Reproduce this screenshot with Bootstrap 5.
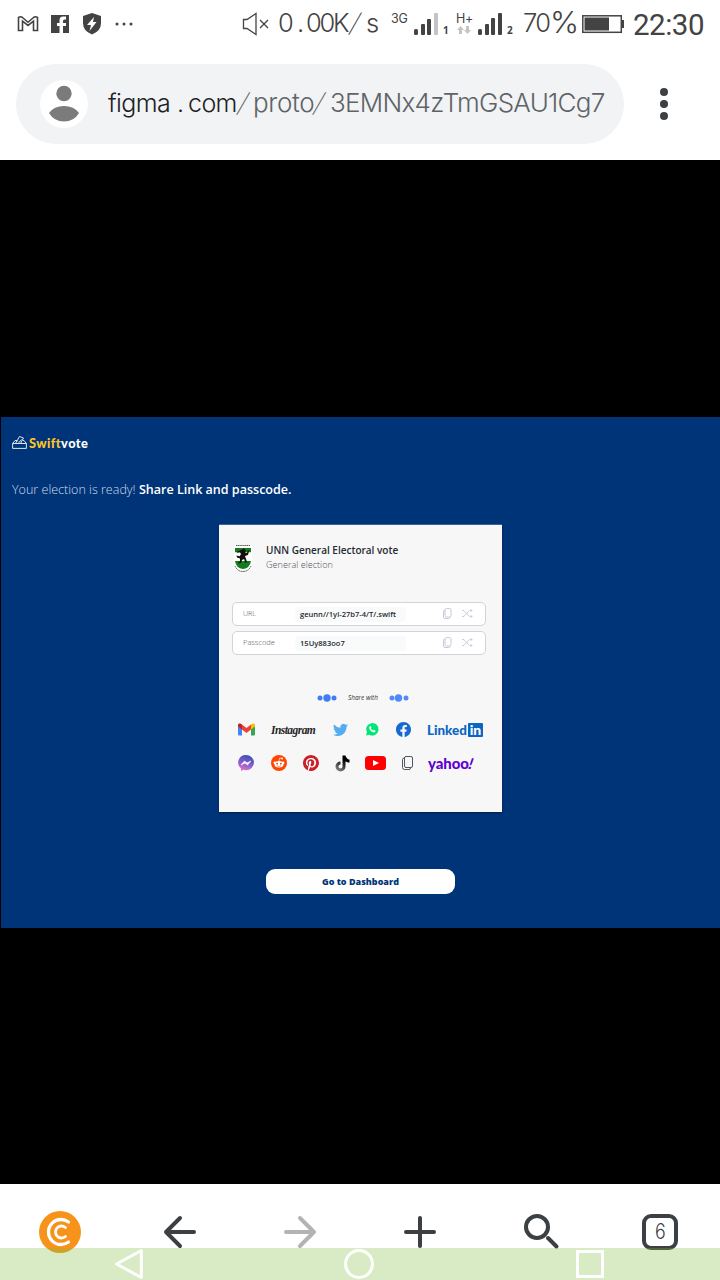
<!DOCTYPE html>
<html lang="en">
<head>
<meta charset="utf-8">
<meta name="viewport" content="width=device-width, initial-scale=1">
<title>Swiftvote</title>
<link href="https://cdn.jsdelivr.net/npm/bootstrap@5.3.0/dist/css/bootstrap.min.css" rel="stylesheet">
<style>
body{width:720px;height:1280px;overflow:hidden;background:#fff;font-family:"Open Sans",sans-serif;line-height:1}
svg{display:block;overflow:visible}
.phone{width:720px;height:1280px}
.status{height:48px;display:grid;grid-template-columns:17px 33px 32px 33px 127px 36px 113px 22px 30px 13px 21px 30px 16px 59px 51px 87px;color:#434343;font-family:Inter,sans-serif;font-weight:300;white-space:nowrap;align-items:start}
.speed{font:300 25.5px/26px Inter,sans-serif;padding-top:10px}
.seg{display:inline-block}
.slash{display:inline-block;transform:skewX(-17deg);font-weight:200;letter-spacing:0}
.net{font:400 12.5px/12px Inter,sans-serif;padding-top:13px;letter-spacing:-.2px}
.sim{font:700 10px/10px "Open Sans",sans-serif;padding-top:25px}
.clock{font:400 29.5px/30px Roboto,sans-serif;padding-top:10px;letter-spacing:-.5px}
.omni{height:112px;padding:16px 16px 0}
.pill{width:608px;height:80px;background:#f1f3f4;padding-left:24px}
.avatar{width:48px;height:48px;background:#fff}
.url{margin-left:20px;font:300 26px/36px Inter,sans-serif;color:#5f6368;white-space:nowrap;padding-bottom:2px}
.host{color:#202124;font-weight:350;font-size:25px;letter-spacing:-.6px}
.stage{height:1024px;background:#000;padding:257px 0 0 1px}
.proto{height:511px;background:#003478;color:#fff}
.brand{padding:18px 0 0 11px;height:40px}
.brandname{font:900 12.8px/16px Lato,sans-serif;margin-left:2px;letter-spacing:.42px}
.ready{font-size:12.54px;line-height:18px;padding:23.5px 0 0 11px;font-weight:300;color:#cfdbec;height:67.5px;white-space:nowrap}
.ready b{font-weight:600;color:#fff}
.panel{width:283px;height:287.5px;margin-left:218px;background:#f7f7f7;color:#252b33;box-shadow:0 1px 2px #0006,0 -.5px 0 #f7f7f780;padding-top:18px}
.title{font-size:10px;line-height:14px;font-weight:600;white-space:nowrap}
.subt{font-size:9.1px;line-height:15px;font-weight:300;color:#50545c;white-space:nowrap}
.field{width:254px;height:24px;margin-left:13px;border:1px solid #d0d3d9;border-radius:5px;background:#fff;display:grid;grid-template-columns:52px 148px 19px 12px;padding-left:10px;align-items:center}
.flabel{font-size:7px;font-weight:300;color:#50545c}
.fval{font-size:7.55px;font-weight:600;width:111px;height:15px;line-height:15px;background:#f9fafa;border-radius:4px;padding-left:5px;white-space:nowrap;margin-top:1px}
.share{font-size:6.4px;line-height:8px;font-style:italic;color:#333;padding:39px 0 0 98px;height:48px;white-space:nowrap}
.apps{display:grid;align-items:center;padding-left:19px;height:20px}
.apps1{grid-template-columns:33px 62px 33px 30px 31px 56px;margin-top:17px}
.apps2{grid-template-columns:32.5px 32.5px 32px 30px 37px 26px 47px;margin-top:13.5px}
.insta{font:italic 700 11.5px/14px "Liberation Serif",serif;color:#262626;letter-spacing:-.55px}
.linked{font:900 13.4px/14px Lato,sans-serif;color:#0a66c2}
.inbox{width:15px;height:14px;background:#0a66c2;color:#fff;font:900 14px/13px Lato,sans-serif;border-radius:1px;text-align:center}
.yahoo{font:900 15px/16px Lato,sans-serif;color:#5f01d1;letter-spacing:-.1px;white-space:nowrap}
.yahoo i{display:inline-block;transform:skewX(-12deg)}
.go{width:189px;height:25px;margin:57px 0 0 265px;padding:0;border:0;border-radius:9px;background:#fff;color:#003478;font-size:9px;font-weight:800;line-height:25px}
.bottombar{height:96px;position:relative}
.bottombar .col{height:96px;display:flex;align-items:center;justify-content:center}
.tabs{width:36px;height:36px;border:4px solid #3c4043;border-radius:9px;color:#3c4043;font:300 21px/28px Inter,sans-serif;text-align:center}
.sysnav{position:absolute;left:0;right:0;bottom:0;height:32px;background:rgba(128,188,58,.3);display:grid;grid-template-columns:229px 232px 30px;padding-left:114px}
</style>
</head>
<body>
<div class="phone d-flex flex-column">
 <header class="status">
  <i></i>
  <svg width="22" height="48"><path d="M1.500 17.500v13h4v-9.300l5.500 4.300 5.500-4.300v9.300h4v-13q-2-1.500-4 0l-5.500 4.800-5.500-4.800q-2-1.500-4 0z" fill="none" stroke="#434343" stroke-width="1.600"/></svg>
  <svg width="20" height="48"><path d="M1 15h18v18h-6v-7h3v-3h-3v-2q0-1.500 1.500-1.500H16v-3h-3q-3.500 0-3.500 4V23H7v3h2.500v7H1z" fill="#434343"/></svg>
  <svg width="20" height="48"><path d="M10 13l9 3v7q0 8-9 11.500Q1 31 1 23v-7z" fill="#434343"/><path d="M12 17l-7 8h4l-1.500 6 7-9H11z" fill="#fff"/></svg>
  <svg width="20" height="48" fill="#434343"><circle cx="2" cy="24" r="1.500"/><circle cx="9" cy="24" r="1.500"/><circle cx="16" cy="24" r="1.500"/></svg>
  <svg width="30" height="48" fill="none" stroke="#434343" stroke-width="1.300"><path d="M1.500 19.500h3.500l9-6v21l-9-6H1.500zM18 20l8 8M26 20l-8 8"/></svg>
  <div class="speed"><span class="seg" style="width:19px">0</span><span class="seg" style="width:9px">.</span><span class="seg" style="width:45px;letter-spacing:-2.300px">00K</span><span class="seg" style="width:15px"><span class="slash">/</span></span><span>s</span></div>
  <div class="net">3G</div>
  <svg width="26" height="48" fill="#434343"><rect x="1" y="29" width="4" height="6" rx="1.500"/><rect x="8" y="24" width="4" height="11" rx="1"/><rect x="14" y="19" width="4" height="16" rx="1"/><rect x="21" y="13" width="4" height="22" rx="1" fill="#c4c4c4"/></svg>
  <div class="sim">1</div>
  <div class="net">H+<svg width="16" height="8" fill="#c4c4c4" style="margin-top:1px"><path d="M4.500 0l3.500 4H6v4H3V4H1zM11.500 8L8 4h2V0h3v4h2z"/></svg></div>
  <svg width="26" height="48" fill="#434343"><rect x="1" y="29" width="4" height="6" rx="1.500"/><rect x="8" y="24" width="4" height="11" rx="1"/><rect x="14" y="18" width="4" height="17" rx="1"/><rect x="21" y="13" width="4" height="22" rx="1"/></svg>
  <div class="sim">2</div>
  <div class="speed" style="letter-spacing:-1.500px">70<span style="display:inline-block;transform:scale(1.220,1.150);transform-origin:0 50%">%</span></div>
  <svg width="44" height="48"><rect x=".8" y="15.800" width="38.500" height="16.500" fill="#fff" stroke="#434343" stroke-width="1.500"/><rect x="2.500" y="17.500" width="24.500" height="13" fill="#434343"/><rect x="39" y="20" width="3" height="8" fill="#434343"/></svg>
  <div class="clock">22:30</div>
 </header>

 <div class="omni d-flex">
  <div class="pill rounded-pill d-flex align-items-center">
   <div class="avatar rounded-circle"><svg width="48" height="48" fill="#7b7b7b"><circle cx="24" cy="13.500" r="7.700"/><path d="M9 33q5-7 15-7t15 7q-5 8.500-15 8.500T9 33z"/></svg></div>
   <div class="url"><span class="seg host" style="width:69px">figma</span><span class="seg host" style="width:11px">.</span><span class="seg host" style="width:51px">com</span><span class="seg" style="width:14px"><span class="slash">/</span></span><span class="seg" style="width:62px;letter-spacing:-.300px">proto</span><span class="seg" style="width:15px"><span class="slash">/</span></span><span class="seg" style="letter-spacing:-.720px">3EMNx4zTmGSAU1Cg7</span></div>
  </div>
  <svg width="80" height="80" fill="#3c4043"><circle cx="40" cy="28" r="4"/><circle cx="40" cy="40" r="4"/><circle cx="40" cy="52" r="4"/></svg>
 </div>

 <main class="stage">
  <div class="proto">
   <div class="brand d-flex">
    <svg width="15" height="14" fill="none" stroke="#dce6f2" stroke-width="1"><path d="M.6 8.500h13.800v4.900H.6zM.6 8.500L3 5.500h2M14.400 8.500L12 5.500h-1M3.500 8.500L7.500 1.500l4 1.500-3 5.500M6 6.500l1 1 2.500-3"/></svg>
    <div class="brandname"><span style="color:#fdc527">Swift</span>vote</div>
   </div>
   <div class="ready">Your election is ready! <b>Share Link and passcode.</b></div>
   <section class="panel">
    <div class="d-flex" style="height:59px">
     <svg width="47" height="32"><path d="M15 2h18v25H15z" fill="#fff"/><path d="M17 2.500h14" stroke="#555" stroke-dasharray="1.500 .6"/><path d="M16 5h16v4.500H16zM16 18h16q-1 7-8 8-7-1-8-8z" fill="#117d1b"/><path d="M16 9.500h16V18H16z" fill="#fff"/><path d="M22 7l3-1.500 2 2-1 2 2 .5 1-3 1 1-1 4-3 1 1 3 1 3-1.500 1-1.500-4-2 1-1 3-2.500.5v-1.500l1.500-.5 0-3-3-1-.5-2 3 .8 1.500-2-1-2-3 .5v-1z" fill="#111"/><path d="M16 23q2.500 5.500 8 5.500t8-5.500" fill="none" stroke="#555" stroke-dasharray="1.500 .6"/></svg>
     <div><div class="title">UNN General Electoral vote</div><div class="subt">General election</div></div>
    </div>
    <div class="field"><span class="flabel">URL</span><span class="fval">geunn//1yl-27b7-4/T/.swift</span>
     <svg width="9" height="11" fill="none" stroke="#c6cada"><rect x="2" y=".5" width="6" height="8.500" rx="1.500"/><path d="M2 2Q.5 2 .5 3.500V9q0 1.500 1.500 1.500h3.500Q7 10.500 7 9"/></svg>
     <svg width="11" height="9" fill="none" stroke="#c6cada" stroke-width=".9"><path d="M0 1.500h2l5.500 6H10M0 7.500h2l5.500-6H10M8.500 0L10 1.500 8.500 3M8.500 6L10 7.500 8.500 9"/></svg></div>
    <div class="field" style="margin-top:5px"><span class="flabel" style="font-size:7.500px">Passcode</span><span class="fval">15Uy883oo7</span>
     <svg width="9" height="11" fill="none" stroke="#c6cada"><rect x="2" y=".5" width="6" height="8.500" rx="1.500"/><path d="M2 2Q.5 2 .5 3.500V9q0 1.500 1.500 1.500h3.500Q7 10.500 7 9"/></svg>
     <svg width="11" height="9" fill="none" stroke="#c6cada" stroke-width=".9"><path d="M0 1.500h2l5.500 6H10M0 7.500h2l5.500-6H10M8.500 0L10 1.500 8.500 3M8.500 6L10 7.500 8.500 9"/></svg></div>
    <div class="share d-flex align-items-center">
     <svg width="31" height="8" fill="#3f7cf6"><circle cx="3" cy="4" r="2.500"/><circle cx="10" cy="4" r="3.700"/><circle cx="17" cy="4" r="2.500"/></svg>
     <span style="width:41px">Share with</span>
     <svg width="20" height="8" fill="#5288f8"><circle cx="3" cy="4" r="2.500"/><circle cx="9.500" cy="4" r="3.700"/><circle cx="17" cy="4" r="2.500"/></svg>
    </div>
    <div class="apps apps1">
     <svg width="17" height="13" viewBox="0 0 17 13"><path d="M0 2v9.500Q0 12.500 1 12.500h3V5z" fill="#4285f4"/><path d="M13 5v7.500h3q1 0 1-1V2z" fill="#34a853"/><path d="M13 1.500v5l4-3V2q0-1.500-1.500-1.500T13 1.500z" fill="#fbbc04"/><path d="M4 1.500l4.500 3.500L13 1.500v5L8.500 10 4 6.500z" fill="#ea4335"/><path d="M0 2v1.500l4 3v-5Q2.500.2 1.200.6 0 1 0 2z" fill="#c5221f"/></svg>
     <span class="insta">Instagram</span>
     <svg width="15" height="15" viewBox="0 0 16 16" fill="#55acee"><path d="M5.026 15c6.038 0 9.341-5.003 9.341-9.334 0-.14 0-.282-.006-.422A6.685 6.685 0 0 0 16 3.542a6.658 6.658 0 0 1-1.889.518 3.301 3.301 0 0 0 1.447-1.817 6.533 6.533 0 0 1-2.087.793A3.286 3.286 0 0 0 7.875 6.030a9.325 9.325 0 0 1-6.767-3.429 3.289 3.289 0 0 0 1.018 4.382A3.323 3.323 0 0 1 .64 6.575v.045a3.288 3.288 0 0 0 2.632 3.218 3.203 3.203 0 0 1-.865.115 3.230 3.230 0 0 1-.614-.057 3.283 3.283 0 0 0 3.067 2.277A6.588 6.588 0 0 1 .78 13.580a6.320 6.320 0 0 1-.78-.045A9.344 9.344 0 0 0 5.026 15z"/></svg>
     <svg width="12.500" height="12.500" viewBox="0 0 16 16"><path d="M0 16l1.200-4A8 8 0 1 1 4.200 15z" fill="#00e676"/><path d="M5 4l1-.3 1 2.300-.7 1q1 2 2.900 2.700l.9-1 2.200 1.100q0 2-2.300 2.200Q5 11 4 6.500 4 4.700 5 4z" fill="#fff"/></svg>
     <svg width="15" height="15" viewBox="0 0 16 16" fill="#1769d2"><path d="M16 8.049c0-4.446-3.582-8.050-8-8.050C3.580 0-.002 3.603-.002 8.050c0 4.017 2.926 7.347 6.750 7.951v-5.625h-2.030V8.050H6.750V6.275c0-2.017 1.195-3.131 3.022-3.131.876 0 1.791.157 1.791.157v1.980h-1.009c-.993 0-1.303.621-1.303 1.258v1.510h2.218l-.354 2.326H9.250V16c3.824-.604 6.750-3.934 6.750-7.951z"/></svg>
     <span class="d-flex align-items-center"><span class="linked" style="width:41px">Linked</span><span class="inbox">in</span></span>
    </div>
    <div class="apps apps2">
     <svg width="16" height="16" viewBox="0 0 16 16"><defs><linearGradient id="ms" x1="0.700" y1="0" x2="0.400" y2="1"><stop stop-color="#3b4fae"/><stop offset=".5" stop-color="#7a5bd0"/><stop offset="1" stop-color="#e074c8"/></linearGradient></defs><path d="M8 0a8 7.600 0 0 1 0 15.200q-1.200 0-2.400-.4L3 15.900v-2.400A7.600 7.600 0 0 1 8 0z" fill="url(#ms)"/><path d="M3 10l3.500-4 2.500 2 4-2-3.500 4L7 8z" fill="#fff" stroke="#fff" stroke-width=".6"/></svg>
     <svg width="16" height="16" viewBox="0 0 16 16"><circle cx="8" cy="8" r="8" fill="#ff4500"/><g fill="#fff"><ellipse cx="8" cy="9.300" rx="4.500" ry="3.200"/><circle cx="3.800" cy="7.700" r="1.200"/><circle cx="12.200" cy="7.700" r="1.200"/><circle cx="11" cy="3.600" r="1"/></g><path d="M8 6l.7-3 2.300.6" stroke="#fff" stroke-width=".6" fill="none"/><g fill="#ff4500"><circle cx="6.200" cy="8.700" r=".9"/><circle cx="9.800" cy="8.700" r=".9"/></g><path d="M6 10.800q2 1.300 4 0" stroke="#ff4500" stroke-width=".6" fill="none"/></svg>
     <svg width="16" height="16" viewBox="0 0 16 16"><circle cx="8" cy="8" r="7.500" fill="#fff"/><path fill="#cb2027" d="M8 0a8 8 0 0 0-2.915 15.452c-.07-.633-.134-1.606.027-2.297.146-.625.938-3.977.938-3.977s-.239-.479-.239-1.187c0-1.113.645-1.943 1.448-1.943.682 0 1.012.512 1.012 1.127 0 .686-.437 1.712-.663 2.663-.188.796.4 1.446 1.185 1.446 1.422 0 2.515-1.500 2.515-3.664 0-1.915-1.377-3.254-3.342-3.254-2.276 0-3.612 1.707-3.612 3.471 0 .688.265 1.425.595 1.826a.24.24 0 0 1 .056.23c-.061.252-.196.796-.222.907-.035.146-.116.177-.268.107-1-.465-1.624-1.926-1.624-3.100 0-2.523 1.834-4.840 5.286-4.840 2.775 0 4.932 1.977 4.932 4.620 0 2.757-1.739 4.976-4.151 4.976-.811 0-1.573-.421-1.834-.919l-.498 1.902c-.181.695-.669 1.566-.995 2.097A8 8 0 1 0 8 0z"/></svg>
     <svg width="16" height="17" viewBox="0.500 0 16 16"><defs><linearGradient id="tk" x1="0.800" y1="0" x2="0.200" y2="1"><stop offset=".3" stop-color="#000"/><stop offset="1" stop-color="#888"/></linearGradient></defs><path fill="url(#tk)" d="M8 0h3c.144.715.54 1.617 1.235 2.512C12.895 3.389 13.797 4 15 4v3c-1.753 0-3-.5-4-1.300V11a5 5 0 1 1-5-5v3a2 2 0 1 0 2 2V0Z"/></svg>
     <svg width="21" height="14"><rect width="21" height="14" rx="3.500" fill="#f00"/><path d="M8 4l6 3-6 3z" fill="#fff"/></svg>
     <svg width="11" height="14" fill="none" stroke="#3c4257" stroke-width=".9"><rect x="2.500" y=".5" width="8" height="11" rx="1.500"/><path d="M2.500 2Q.5 2 .5 3.500v8q0 2 2 2H7q1.500 0 1.500-1.500"/></svg>
     <span class="yahoo">yahoo<i>!</i></span>
    </div>
   </section>
   <button class="go btn d-block">Go to Dashboard</button>
  </div>
 </main>

 <footer class="bottombar">
  <div class="row g-0">
   <div class="col"><svg width="42" height="42"><circle cx="21" cy="21" r="21" fill="#f7931a"/><g fill="none" stroke="#fff" stroke-width="3.300" stroke-linecap="round"><path d="M29.500 11Q26 8.500 22 8.500a12.300 12.300 0 0 0 0 25Q26 33.500 29.500 31"/><path d="M26.500 16.500Q24.500 15 22.500 15a6 6 0 0 0 0 12Q24.500 27 26.500 25.500" stroke-width="2.800"/></g></svg></div>
   <div class="col"><svg width="32" height="32" fill="none" stroke="#3c4043" stroke-width="4" stroke-linecap="round" stroke-linejoin="round"><path d="M30 16H2M16 2L2 16l14 14"/></svg></div>
   <div class="col"><svg width="32" height="32" fill="none" stroke="#b1b3b4" stroke-width="4" stroke-linecap="round" stroke-linejoin="round"><path d="M2 16h28M16 2l14 14-14 14"/></svg></div>
   <div class="col"><svg width="32" height="32" fill="none" stroke="#3c4043" stroke-width="4" stroke-linecap="round"><path d="M2 16h28M16 2v28"/></svg></div>
   <div class="col"><svg width="32" height="36" fill="none" stroke="#3c4043" stroke-width="4" stroke-linecap="round"><circle cx="13" cy="13" r="11"/><path d="M24 24l8.500 8.500"/></svg></div>
   <div class="col"><div class="tabs"><span style="display:inline-block;transform:scaleX(.85)">6</span></div></div>
  </div>
  <nav class="sysnav">
   <svg width="30" height="32" fill="none" stroke="#fff" stroke-width="3"><path d="M27.300 2.500v27L2.500 16z" stroke-linejoin="round"/></svg>
   <svg width="32" height="32" fill="none" stroke="#fff" stroke-width="3"><circle cx="16" cy="16" r="13.500"/></svg>
   <svg width="30" height="32" fill="none" stroke="#fff" stroke-width="3"><rect x="2.500" y="3.500" width="25" height="25"/></svg>
  </nav>
 </footer>
</div>
<script src="https://cdn.jsdelivr.net/npm/bootstrap@5.3.0/dist/js/bootstrap.bundle.min.js"></script>
</body>
</html>
